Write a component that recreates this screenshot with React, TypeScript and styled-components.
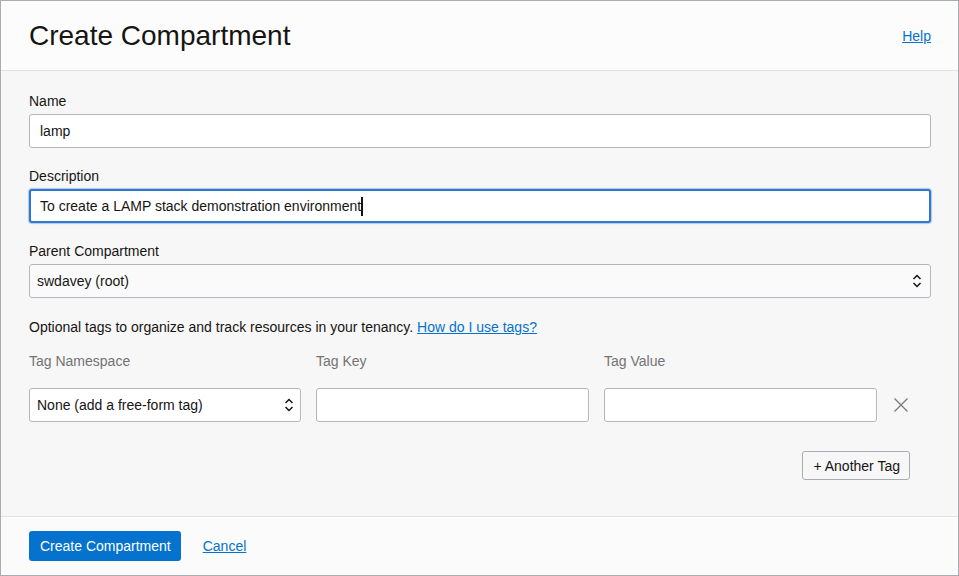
import React from "react";
import styled, { createGlobalStyle, css } from "styled-components";

const GlobalStyle = createGlobalStyle`
  * { box-sizing: border-box; }
  html, body { margin: 0; padding: 0; }
  body {
    font-family: "Liberation Sans", Arial, sans-serif;
    color: #161513;
    background: #ffffff;
  }
`;

const Panel = styled.div`
  width: 959px;
  height: 576px;
  border: 1px solid #a9adb2;
  display: flex;
  flex-direction: column;
  background: #f7f7f7;
`;

const Header = styled.header`
  height: 70px;
  flex: none;
  background: #fcfcfc;
  border-bottom: 1px solid #e2e2e2;
  display: flex;
  align-items: center;
  justify-content: space-between;
  padding: 0 27px 0 28px;
`;

const Title = styled.h1`
  margin: 0;
  font-size: 28px;
  font-weight: 400;
  color: #161513;
  line-height: 32px;
`;

const Link = styled.a`
  color: #0572ce;
  font-size: 14px;
  text-decoration: underline;
  cursor: pointer;
`;

const Body = styled.main`
  flex: 1;
  padding: 20px 27px 0 28px;
  display: flex;
  flex-direction: column;
`;

const Field = styled.div<{ $gap?: number }>`
  display: flex;
  flex-direction: column;
  margin-bottom: ${(p) => p.$gap ?? 18}px;
`;

const Label = styled.label<{ $muted?: boolean }>`
  font-size: 14px;
  line-height: 20px;
  margin-bottom: 3px;
  color: ${(p) => (p.$muted ? "#737373" : "#161513")};
`;

const controlBase = css`
  height: 34px;
  width: 100%;
  border: 1px solid #b3b7bd;
  border-radius: 3px;
  font-family: "Liberation Sans", Arial, sans-serif;
  font-size: 14px;
  color: #161513;
  outline: none;
`;

const InputWrap = styled.div`
  position: relative;
  width: 100%;
`;

const TextInput = styled.input<{ $focused?: boolean }>`
  ${controlBase};
  background: #ffffff;
  padding: 0 10px;
  caret-color: transparent;
  ${(p) =>
    p.$focused &&
    css`
      border: 2px solid #2f78d0;
      padding: 0 9px;
      box-shadow: 0 0 1px 1px rgba(47, 120, 208, 0.35);
    `}
`;

const Caret = styled.span<{ $left: number }>`
  position: absolute;
  top: 8px;
  left: ${(p) => p.$left}px;
  width: 2px;
  height: 19px;
  background: #161513;
  pointer-events: none;
`;

const SelectWrap = styled.div`
  position: relative;
  width: 100%;
`;

const Select = styled.select<{ $bg?: string }>`
  ${controlBase};
  appearance: none;
  -webkit-appearance: none;
  background: ${(p) => p.$bg ?? "#ffffff"};
  padding: 0 28px 0 7px;
`;

const Chevron = styled.svg<{ $right: number }>`
  position: absolute;
  top: 50%;
  right: ${(p) => p.$right}px;
  transform: translateY(-50%);
  pointer-events: none;
`;

const Hint = styled.p`
  margin: 0 0 14px;
  font-size: 14px;
  line-height: 20px;
  color: #161513;
`;

const TagGrid = styled.div`
  display: grid;
  grid-template-columns: 272px 273px 273px 1fr;
  column-gap: 15px;
  row-gap: 17px;
  align-items: center;
  margin-bottom: 29px;
`;

const TagLabel = styled.span`
  font-size: 14px;
  line-height: 20px;
  color: #737373;
`;

const RemoveButton = styled.button`
  justify-self: start;
  border: none;
  background: transparent;
  padding: 0;
  width: 18px;
  height: 18px;
  display: flex;
  align-items: center;
  justify-content: center;
  cursor: pointer;
`;

const ActionsRow = styled.div`
  display: flex;
  justify-content: flex-end;
  padding-right: 21px;
`;

const SecondaryButton = styled.button`
  height: 29px;
  padding: 0 9px 0 10px;
  border: 1px solid #a9adb3;
  border-radius: 3px;
  background: #f7f7f7;
  font-family: "Liberation Sans", Arial, sans-serif;
  font-size: 14px;
  color: #161513;
  cursor: pointer;
`;

const Footer = styled.footer`
  height: 59px;
  flex: none;
  background: #fbfbfb;
  border-top: 1px solid #e2e2e2;
  display: flex;
  align-items: flex-start;
  gap: 22px;
  padding: 14px 28px 0;
`;

const PrimaryButton = styled.button`
  height: 30px;
  padding: 0 10px 0 11px;
  border: none;
  border-radius: 3px;
  background: #0572ce;
  color: #ffffff;
  font-family: "Liberation Sans", Arial, sans-serif;
  font-size: 14px;
  cursor: pointer;
`;

const FooterLink = styled(Link)`
  line-height: 30px;
`;

function UpDown({ right }: { right: number }) {
  return (
    <Chevron $right={right} width="10" height="16" viewBox="0 0 10 16">
      <path d="M1.5 6 L5 2.5 L8.5 6" fill="none" stroke="#161513" strokeWidth="1.5" />
      <path d="M1.5 10 L5 13.5 L8.5 10" fill="none" stroke="#161513" strokeWidth="1.5" />
    </Chevron>
  );
}

export default function App() {
  return (
    <>
      <GlobalStyle />
      <Panel>
        <Header>
          <Title>Create Compartment</Title>
          <Link>Help</Link>
        </Header>
        <Body>
          <Field>
            <Label>Name</Label>
            <TextInput defaultValue="lamp" />
          </Field>
          <Field>
            <Label>Description</Label>
            <InputWrap>
              <TextInput
                $focused
                defaultValue="To create a LAMP stack demonstration environment"
              />
              <Caret $left={332} />
            </InputWrap>
          </Field>
          <Field $gap={19}>
            <Label>Parent Compartment</Label>
            <SelectWrap>
              <Select $bg="#fafafa" defaultValue="root">
                <option value="root">swdavey (root)</option>
              </Select>
              <UpDown right={9} />
            </SelectWrap>
          </Field>
          <Hint>
            Optional tags to organize and track resources in your tenancy.{" "}
            <Link>How do I use tags?</Link>
          </Hint>
          <TagGrid>
            <TagLabel>Tag Namespace</TagLabel>
            <TagLabel>Tag Key</TagLabel>
            <TagLabel>Tag Value</TagLabel>
            <span />
            <SelectWrap>
              <Select defaultValue="none">
                <option value="none">None (add a free-form tag)</option>
              </Select>
              <UpDown right={7} />
            </SelectWrap>
            <TextInput />
            <TextInput />
            <RemoveButton aria-label="Remove tag">
              <svg width="16" height="16" viewBox="0 0 16 16">
                <path d="M1.5 1.5 L14.5 14.5 M14.5 1.5 L1.5 14.5" stroke="#7a7a7a" strokeWidth="1.3" />
              </svg>
            </RemoveButton>
          </TagGrid>
          <ActionsRow>
            <SecondaryButton>+ Another Tag</SecondaryButton>
          </ActionsRow>
        </Body>
        <Footer>
          <PrimaryButton>Create Compartment</PrimaryButton>
          <FooterLink>Cancel</FooterLink>
        </Footer>
      </Panel>
    </>
  );
}
